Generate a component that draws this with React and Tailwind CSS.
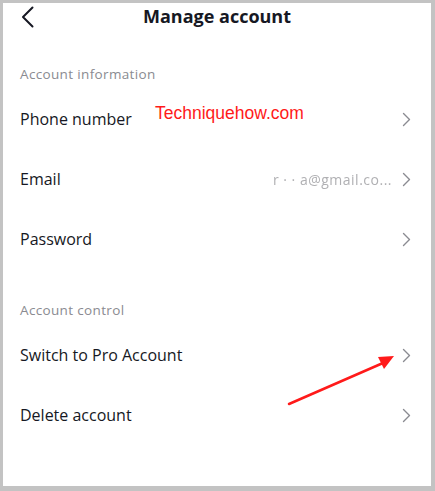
import React from "react";

function Chevron() {
  return (
    <svg width="9" height="15" viewBox="0 0 9 15" fill="none" className="shrink-0">
      <path d="M1.5 1.5 L7.5 7.5 L1.5 13.5" stroke="#8a8b91" strokeWidth="1.4" strokeLinecap="round" strokeLinejoin="round" />
    </svg>
  );
}

function Row({ label, value }) {
  return (
    <div className="h-[60px] flex items-center pl-[17px] pr-[20px]">
      <span className="text-[16px] text-[#161823] flex-1">{label}</span>
      {value && (
        <span className="text-[14px] text-[#b0b0b3] mr-[10px] blur-[0.4px] tracking-[0.5px] whitespace-pre">{value}</span>
      )}
      <Chevron />
    </div>
  );
}

function SectionLabel({ children }) {
  return (
    <div className="h-[30px] flex items-center pl-[17px] text-[13.5px] tracking-[0.35px] text-[#8a8b91]">{children}</div>
  );
}

export default function App() {
  return (
    <div
      className="w-[435px] h-[491px] bg-[#c3c3c3] pt-[3px] pl-[3px] pr-[4px] pb-[5px]"
      style={{ fontFamily: '"Open Sans", "Liberation Sans", Arial, sans-serif' }}
    >
      <div className="relative w-full h-full bg-white flex flex-col">
        <div className="h-[27px] relative flex items-center justify-center">
          <svg width="14" height="22" viewBox="0 0 14 22" fill="none" className="absolute left-[18px] top-[3px]">
            <path d="M11.5 1.5 L2 11 L11.5 20.5" stroke="#161823" strokeWidth="2" strokeLinecap="round" strokeLinejoin="round" />
          </svg>
          <span className="text-[18px] font-bold text-[#161823]">Manage account</span>
        </div>
        <div className="h-[29px]" />
        <SectionLabel>Account information</SectionLabel>
        <Row label="Phone number" />
        <Row label="Email" value={"r \u00b7 \u00b7 a@gmail.co..."} />
        <Row label="Password" />
        <div className="h-[26px]" />
        <SectionLabel>Account control</SectionLabel>
        <Row label="Switch to Pro Account" />
        <Row label="Delete account" />

        <span
          className="absolute left-[152px] top-[102px] text-[17.5px] text-[#ff1a1a] leading-none"
          style={{ fontFamily: '"Liberation Sans", Arial, sans-serif' }}
        >
          Techniquehow.com
        </span>

        <svg className="absolute left-0 top-0 pointer-events-none" width="428" height="483" viewBox="0 0 428 483">
          <line x1="286" y1="401" x2="380" y2="360" stroke="#ff1a1a" strokeWidth="2.5" strokeLinecap="round" />
          <polygon points="391,353 375,354 381,366" fill="#ff1a1a" />
        </svg>
      </div>
    </div>
  );
}
